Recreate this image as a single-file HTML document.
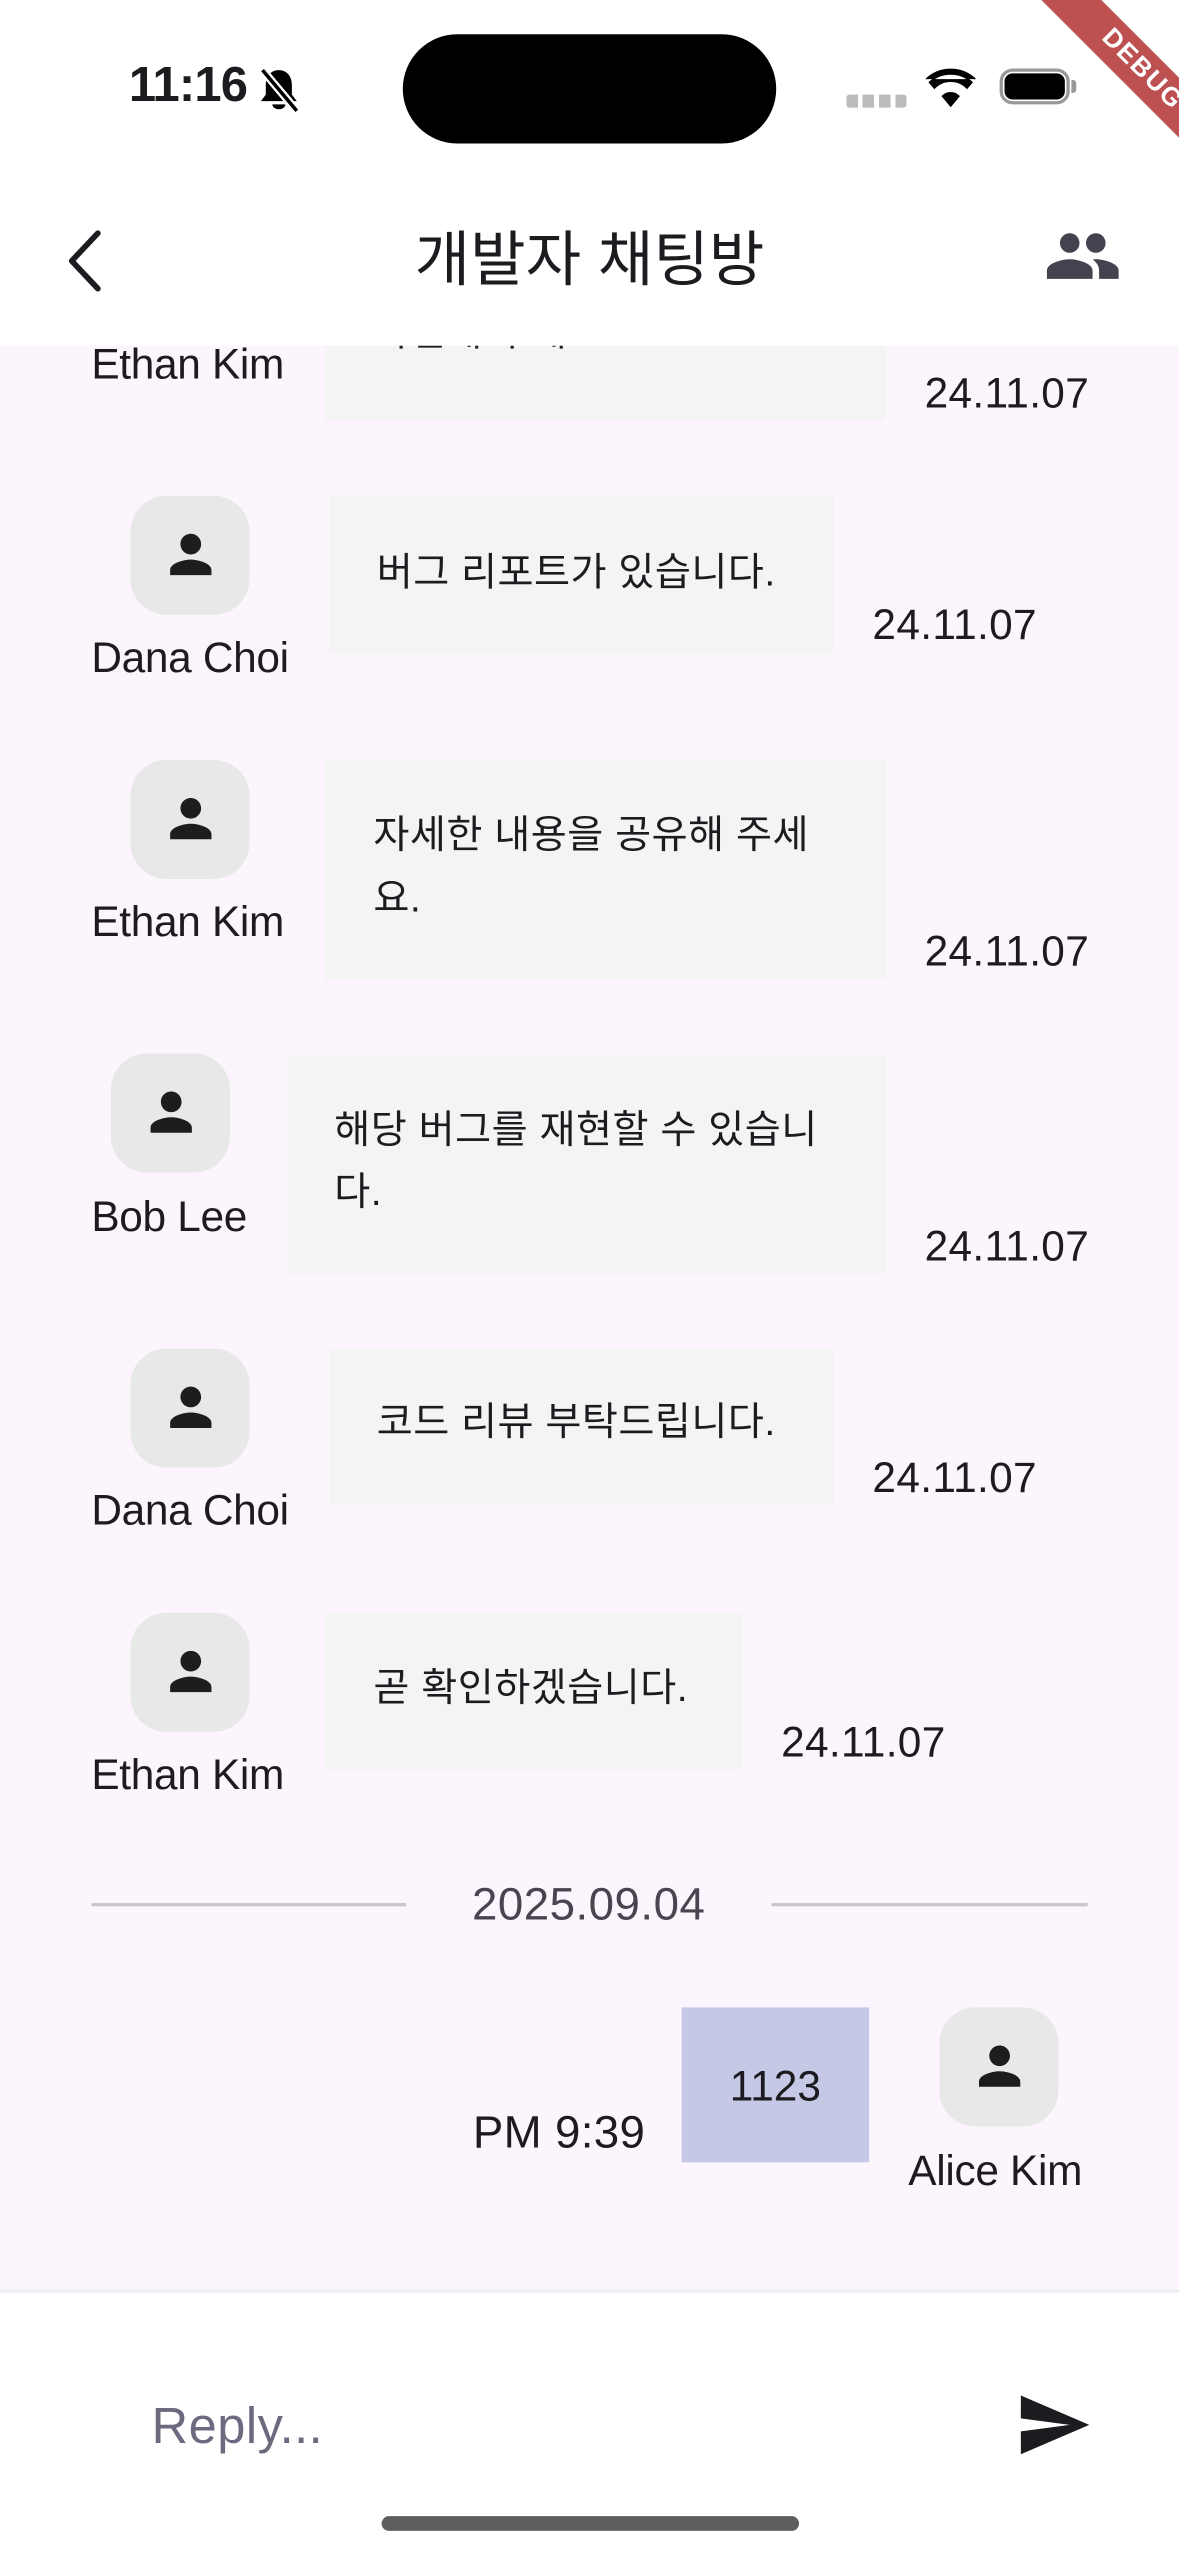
<!DOCTYPE html>
<html><head><meta charset="utf-8">
<style>
html,body{margin:0;padding:0;width:1179px;height:2556px;overflow:hidden;background:#fff;}
#w{position:absolute;left:0;top:0;width:723px;height:1568px;transform:scale(1.63071);transform-origin:0 0;font-family:"Liberation Sans","Noto Sans CJK KR",sans-serif;color:#1d1b20;}
.a{position:absolute;}
.av{position:absolute;width:73px;height:73px;border-radius:22px;background:#e8e8e8;}
.av svg{position:absolute;left:18px;top:17px;}
.nm{position:absolute;font-size:26px;line-height:28px;white-space:nowrap;letter-spacing:-0.2px;}
.bb{position:absolute;background:#f4f4f4;}
.tx{position:absolute;font-size:24px;line-height:30px;white-space:nowrap;letter-spacing:0.3px;}
.dt{position:absolute;font-size:26px;line-height:28px;letter-spacing:0.2px;}
</style></head><body>
<div id="w">
<!-- status bar -->
<div class="a" style="left:79px;top:35px;font-size:30px;font-weight:bold;line-height:36px;letter-spacing:-0.5px;">11:16</div>
<svg class="a" style="left:158px;top:40px" width="26" height="30" viewBox="0 0 26 30"><path d="M13 3c-5 0-8 4-8 9v6l-3 4h22l-3-4v-6c0-5-3-9-8-9zM9 24a4 3 0 0 0 8 0z" fill="#000"/><line x1="3" y1="3" x2="24" y2="28" stroke="#fff" stroke-width="5"/><line x1="3" y1="3" x2="24" y2="28" stroke="#000" stroke-width="2.2"/></svg>
<div class="a" style="left:247px;top:21px;width:229px;height:67px;border-radius:34px;background:#000"></div>
<div class="a" style="left:519px;top:58px;width:37px;height:8px;background:repeating-linear-gradient(90deg,#bbb 0 7px,transparent 7px 10px);border-radius:2px"></div>
<svg class="a" style="left:567px;top:41px" width="32" height="25" viewBox="0 0 32 25"><path d="M16 24l-5-6a7 7 0 0 1 10 0zM6 13a14 14 0 0 1 20 0l3-3.5a19 19 0 0 0-26 0zM1 7.5a22 22 0 0 1 30 0" fill="#000" stroke="#000" stroke-width="1"/></svg>
<div class="a" style="left:613px;top:42px;width:43px;height:22px;border:2px solid #999;border-radius:8px;box-sizing:border-box"></div>
<div class="a" style="left:616px;top:45px;width:37px;height:16px;background:#000;border-radius:5px"></div>
<div class="a" style="left:657px;top:49px;width:3px;height:8px;background:#999;border-radius:0 2px 2px 0"></div>
<!-- debug ribbon -->
<div class="a" style="left:615px;top:30px;width:170px;height:26px;background:rgba(178,50,50,0.85);transform:rotate(45deg);color:#fff;font-size:16px;font-weight:bold;text-align:center;line-height:26px;letter-spacing:1px">DEBUG</div>
<!-- app bar -->
<svg class="a" style="left:38px;top:140px" width="28" height="40" viewBox="0 0 28 40"><path d="M22 3L6 20l16 17" fill="none" stroke="#1d1b20" stroke-width="3.5" stroke-linecap="round" stroke-linejoin="round"/></svg>
<div class="a" style="left:0;width:723px;top:138px;text-align:center;font-size:37px;line-height:44px;color:#1d1b20">개발자 채팅방</div>
<svg class="a" style="left:640px;top:133px" width="48" height="48" viewBox="0 0 24 24"><path fill="#45424f" d="M16 11c1.66 0 2.990-1.34 2.99-3S17.66 5 16 5c-1.66 0-3 1.34-3 3s1.34 3 3 3zm-8 0c1.66 0 2.99-1.34 2.99-3S9.66 5 8 5C6.34 5 5 6.34 5 8s1.34 3 3 3zm0 2c-2.33 0-7 1.17-7 3.5V19h14v-2.5c0-2.330-4.67-3.5-7-3.5zm8 0c-.29 0-.62.02-.97.05 1.16.84 1.97 1.97 1.97 3.45V19h6v-2.5c0-2.33-4.67-3.5-7-3.5z"/></svg>
<!-- chat area -->
<div class="a" style="left:0;top:212px;width:723px;height:1193px;background:#fcf5fd;overflow:hidden">
 <div style="position:absolute;left:0;top:-212px;width:723px;height:1568px">
  <div class="nm" style="left:56px;top:209px">Ethan Kim</div>
  <div class="bb" style="left:199px;top:150px;width:344px;height:108px"></div>
  <div class="tx" style="left:229px;top:190px">확인해 주세요.</div>
  <div class="dt" style="left:567px;top:227px">24.11.07</div>

  <div class="av" style="left:80px;top:304px"><svg width="38" height="38" viewBox="0 0 24 24"><path fill="#1d1d1d" d="M12 12c2.21 0 4-1.79 4-4s-1.79-4-4-4-4 1.79-4 4 1.79 4 4 4zm0 2c-2.67 0-8 1.34-8 4v2h16v-2c0-2.66-5.33-4-8-4z"/></svg></div>
  <div class="nm" style="left:56px;top:389px">Dana Choi</div>
  <div class="bb" style="left:202px;top:304px;width:309px;height:97px"></div>
  <div class="tx" style="left:231px;top:337px">버그 리포트가 있습니다.</div>
  <div class="dt" style="left:535px;top:369px">24.11.07</div>

  <div class="av" style="left:80px;top:466px"><svg width="38" height="38" viewBox="0 0 24 24"><path fill="#1d1d1d" d="M12 12c2.21 0 4-1.79 4-4s-1.79-4-4-4-4 1.79-4 4 1.79 4 4 4zm0 2c-2.67 0-8 1.34-8 4v2h16v-2c0-2.66-5.33-4-8-4z"/></svg></div>
  <div class="nm" style="left:56px;top:551px">Ethan Kim</div>
  <div class="bb" style="left:199px;top:466px;width:344px;height:135px"></div>
  <div class="tx" style="left:229px;top:498px">자세한 내용을 공유해 주세</div>
  <div class="tx" style="left:229px;top:537px">요.</div>
  <div class="dt" style="left:567px;top:569px">24.11.07</div>

  <div class="av" style="left:68px;top:646px"><svg width="38" height="38" viewBox="0 0 24 24"><path fill="#1d1d1d" d="M12 12c2.21 0 4-1.79 4-4s-1.79-4-4-4-4 1.79-4 4 1.79 4 4 4zm0 2c-2.67 0-8 1.34-8 4v2h16v-2c0-2.66-5.33-4-8-4z"/></svg></div>
  <div class="nm" style="left:56px;top:732px">Bob Lee</div>
  <div class="bb" style="left:176px;top:647px;width:367px;height:134px"></div>
  <div class="tx" style="left:205px;top:679px">해당 버그를 재현할 수 있습니</div>
  <div class="tx" style="left:205px;top:717px">다.</div>
  <div class="dt" style="left:567px;top:750px">24.11.07</div>

  <div class="av" style="left:80px;top:827px"><svg width="38" height="38" viewBox="0 0 24 24"><path fill="#1d1d1d" d="M12 12c2.21 0 4-1.79 4-4s-1.79-4-4-4-4 1.79-4 4 1.79 4 4 4zm0 2c-2.67 0-8 1.34-8 4v2h16v-2c0-2.66-5.33-4-8-4z"/></svg></div>
  <div class="nm" style="left:56px;top:912px">Dana Choi</div>
  <div class="bb" style="left:202px;top:827px;width:309px;height:96px"></div>
  <div class="tx" style="left:231px;top:858px">코드 리뷰 부탁드립니다.</div>
  <div class="dt" style="left:535px;top:892px">24.11.07</div>

  <div class="av" style="left:80px;top:989px"><svg width="38" height="38" viewBox="0 0 24 24"><path fill="#1d1d1d" d="M12 12c2.21 0 4-1.79 4-4s-1.79-4-4-4-4 1.79-4 4 1.79 4 4 4zm0 2c-2.67 0-8 1.34-8 4v2h16v-2c0-2.66-5.33-4-8-4z"/></svg></div>
  <div class="nm" style="left:56px;top:1074px">Ethan Kim</div>
  <div class="bb" style="left:199px;top:989px;width:256px;height:96px"></div>
  <div class="tx" style="left:229px;top:1021px">곧 확인하겠습니다.</div>
  <div class="dt" style="left:479px;top:1054px">24.11.07</div>

  <div class="a" style="left:56px;top:1167px;width:193px;height:2px;background:#cbc4cf"></div>
  <div class="a" style="left:473px;top:1167px;width:194px;height:2px;background:#cbc4cf"></div>
  <div class="a" style="left:249px;width:224px;top:1154px;text-align:center;font-size:28px;line-height:28px;color:#49454f;letter-spacing:0.3px">2025.09.04</div>

  <div class="a" style="left:418px;top:1231px;width:115px;height:95px;background:#c5c9e6"></div>
  <div class="a" style="left:418px;width:115px;top:1265px;text-align:center;font-size:26px;line-height:28px">1123</div>
  <div class="dt" style="left:290px;top:1294px;font-size:28px">PM 9:39</div>
  <div class="av" style="left:576px;top:1231px"><svg width="38" height="38" viewBox="0 0 24 24"><path fill="#1d1d1d" d="M12 12c2.21 0 4-1.79 4-4s-1.79-4-4-4-4 1.79-4 4 1.79 4 4 4zm0 2c-2.67 0-8 1.34-8 4v2h16v-2c0-2.66-5.33-4-8-4z"/></svg></div>
  <div class="nm" style="left:557px;top:1317px">Alice Kim</div>
 </div>
</div>
<!-- bottom -->
<div class="a" style="left:0;top:1404px;width:723px;height:2px;background:#efedf1"></div>
<div class="a" style="left:93px;top:1471px;font-size:31px;line-height:34px;color:#6d6a80;letter-spacing:0.3px">Reply...</div>
<svg class="a" style="left:622px;top:1463px" width="48" height="48" viewBox="0 0 24 24"><path fill="#1d1b20" d="M2.01 21L23 12 2.01 3 2 10l15 2-15 2z"/></svg>
<div class="a" style="left:234px;top:1543px;width:256px;height:9px;border-radius:5px;background:#5e5e5e"></div>
</div>
</body></html>
